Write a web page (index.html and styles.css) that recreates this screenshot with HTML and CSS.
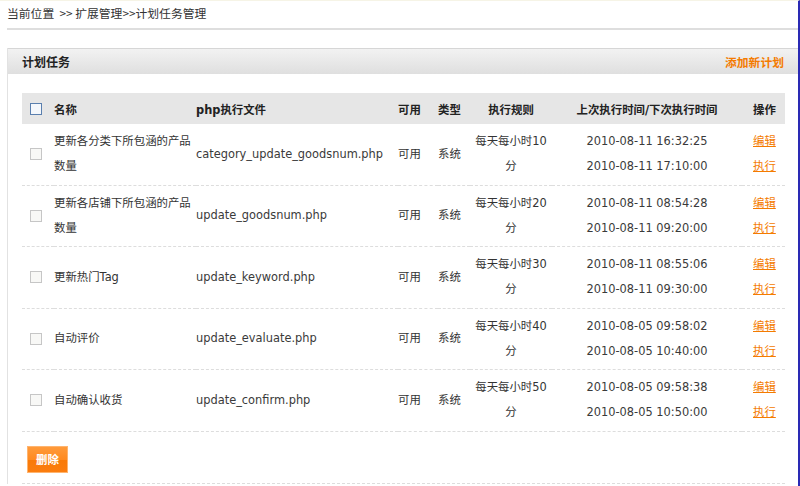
FILE: index.html
```html
<!DOCTYPE html>
<html lang="zh-CN">
<head>
    <meta charset="UTF-8">
    <title>计划任务管理</title>
    <link rel="stylesheet" href="styles.css">
</head>
<body>
<div class="page">
    <!-- 当前位置 -->
    <div class="crumb">当前位置 &nbsp;&gt;&gt; 扩展管理&gt;&gt;计划任务管理</div>

    <div class="panel">
        <div class="panel-head">
            <span class="panel-title">计划任务</span>
            <a class="add-link" href="#">添加新计划</a>
        </div>

        <div class="panel-body">
            <table class="task-table">
                <colgroup>
                    <col class="c-chk"><col class="c-name"><col class="c-file"><col class="c-use">
                    <col class="c-type"><col class="c-rule"><col class="c-time"><col class="c-op">
                </colgroup>
                <thead>
                    <tr>
                        <th><span class="chk chk-all"></span></th>
                        <th>名称</th>
                        <th>php执行文件</th>
                        <th>可用</th>
                        <th>类型</th>
                        <th class="center">执行规则</th>
                        <th class="center">上次执行时间/下次执行时间</th>
                        <th class="op">操作</th>
                    </tr>
                </thead>
                <tbody>
                    <tr>
                        <td><span class="chk"></span></td>
                        <td>更新各分类下所包涵的产品数量</td>
                        <td class="latin">category_update_goodsnum.php</td>
                        <td>可用</td>
                        <td>系统</td>
                        <td class="center rule">每天每小时10分</td>
                        <td class="center latin">2010-08-11 16:32:25<br>2010-08-11 17:10:00</td>
                        <td class="op"><a href="#">编辑</a><br><a href="#">执行</a></td>
                    </tr>
                    <tr>
                        <td><span class="chk"></span></td>
                        <td>更新各店铺下所包涵的产品数量</td>
                        <td class="latin">update_goodsnum.php</td>
                        <td>可用</td>
                        <td>系统</td>
                        <td class="center rule">每天每小时20分</td>
                        <td class="center latin">2010-08-11 08:54:28<br>2010-08-11 09:20:00</td>
                        <td class="op"><a href="#">编辑</a><br><a href="#">执行</a></td>
                    </tr>
                    <tr>
                        <td><span class="chk"></span></td>
                        <td>更新热门Tag</td>
                        <td class="latin">update_keyword.php</td>
                        <td>可用</td>
                        <td>系统</td>
                        <td class="center rule">每天每小时30分</td>
                        <td class="center latin">2010-08-11 08:55:06<br>2010-08-11 09:30:00</td>
                        <td class="op"><a href="#">编辑</a><br><a href="#">执行</a></td>
                    </tr>
                    <tr>
                        <td><span class="chk"></span></td>
                        <td>自动评价</td>
                        <td class="latin">update_evaluate.php</td>
                        <td>可用</td>
                        <td>系统</td>
                        <td class="center rule">每天每小时40分</td>
                        <td class="center latin">2010-08-05 09:58:02<br>2010-08-05 10:40:00</td>
                        <td class="op"><a href="#">编辑</a><br><a href="#">执行</a></td>
                    </tr>
                    <tr>
                        <td><span class="chk"></span></td>
                        <td>自动确认收货</td>
                        <td class="latin">update_confirm.php</td>
                        <td>可用</td>
                        <td>系统</td>
                        <td class="center rule">每天每小时50分</td>
                        <td class="center latin">2010-08-05 09:58:38<br>2010-08-05 10:50:00</td>
                        <td class="op"><a href="#">编辑</a><br><a href="#">执行</a></td>
                    </tr>
                </tbody>
            </table>

            <div class="actions">
                <button class="del-button">删除</button>
            </div>
        </div>
    </div>
</div>
</body>
</html>
```

FILE: styles.css
```css
/* admin page, grey panels with orange accents */
body {
    margin: 0;
    background-color: #ffffff;
    color: #333333;
    font-family: "DejaVu Sans", "Noto Sans CJK SC", sans-serif;
    font-size: 11.4px;
}

.page {
    width: 798px;
    height: 485px;
    border-right: 2px solid #2a2ab4;
    border-top: 1px solid #f6f4e6;
    overflow: hidden;
}

.crumb {
    margin-left: 7px;
    padding-top: 4px;
    height: 23px;
    line-height: 16px;
    font-size: 11.8px;
    font-family: "Noto Sans CJK SC", sans-serif;
    border-bottom: 2px solid #dedede;
}

.panel {
    margin: 18px 0 0 7px;
    border-left: 1px solid #e2e2e2;
}

.panel-head {
    display: flex;
    justify-content: space-between;
    align-items: center;
    height: 25px;
    padding: 0 14px;
    border-top: 1px solid #d6d6d6;
    background: linear-gradient(#f2f2f2, #dfdfdf);
}

.panel-title {
    font-weight: bold;
    font-size: 12px;
    color: #222222;
    font-family: "Noto Sans CJK SC", sans-serif;
}

.add-link {
    color: #f47b00;
    font-weight: bold;
    font-size: 11.8px;
    text-decoration: none;
    font-family: "Noto Sans CJK SC", sans-serif;
}

.panel-body {
    padding: 19px 13px 0 14px;
}

.task-table {
    width: 763px;
    table-layout: fixed;
    border-collapse: collapse;
}

.c-chk { width: 32px; }
.c-name { width: 142px; }
.c-file { width: 202px; }
.c-use { width: 40px; }
.c-type { width: 32px; }
.c-rule { width: 82px; }
.c-time { width: 190px; }
.c-op { width: 43px; }

.task-table th {
    height: 31px;
    padding: 0;
    background-color: #e6e6e6;
    text-align: left;
    font-weight: bold;
    color: #222222;
    white-space: nowrap;
}

.task-table td {
    height: 50px;
    padding: 5px 0 5.5px;
    line-height: 25px;
    border-bottom: 1px dashed #dddddd;
    vertical-align: middle;
}

.task-table .center {
    text-align: center;
}

.task-table td.rule {
    padding-left: 4px;
    padding-right: 4px;
}

.task-table .op {
    padding-left: 11px;
}

.latin {
    color: #3a3a3a;
}

.op a {
    color: #f47b00;
    text-decoration: underline;
}

.chk {
    display: block;
    width: 10px;
    height: 10px;
    margin-left: 8px;
    border: 1px solid #c6c6c6;
    background-color: #f8f8f6;
}

.chk-all {
    border-color: #5a7fae;
    background-color: #f4f7fb;
}

.actions {
    padding: 14px 0 10px 5px;
    border-bottom: 1px dashed #dddddd;
}

.del-button {
    display: block;
    width: 41px;
    height: 27px;
    padding: 0;
    border: 1px solid #ffb46e;
    background: linear-gradient(#ff9a3a 0%, #ff8a20 50%, #f97a08 51%, #fb7d0e 100%);
    color: #ffffff;
    font-weight: bold;
    font-size: 11.4px;
    font-family: "Noto Sans CJK SC", sans-serif;
    cursor: pointer;
}
```
